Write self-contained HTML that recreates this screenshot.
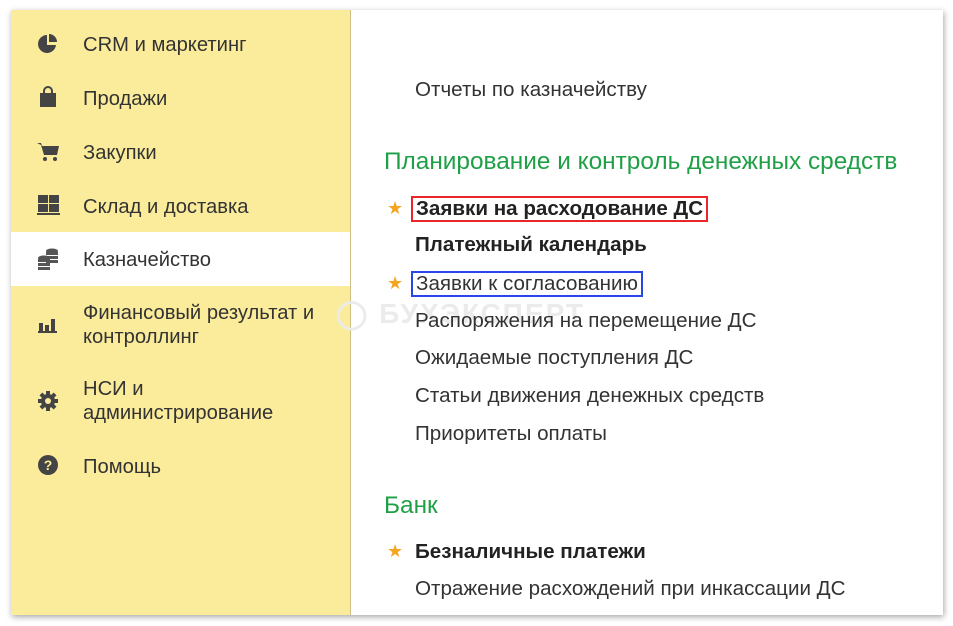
<!DOCTYPE html>
<html><head><meta charset="utf-8"><style>
body{margin:0;width:953px;height:626px;background:#fff;position:relative;overflow:hidden;font-family:"Liberation Sans",Arial,sans-serif;}
.panel{position:absolute;left:11px;top:10px;width:932px;height:605px;background:#fff;box-shadow:1px 2px 6px rgba(0,0,0,.35);overflow:hidden}
.side{position:absolute;left:0;top:0;width:339px;height:605px;background:#FBEC9C;border-right:1px solid #cdbf86}
.it{position:absolute;left:0;width:339px;font-size:20.2px;color:#333;line-height:24px}
.it .t{position:absolute;left:72px;top:1px}
.it svg{position:absolute;left:26px}
.act{background:#fff}
.r{position:absolute;font-size:20.6px;color:#333;white-space:nowrap;line-height:24px}
.b{font-weight:bold;color:#222;font-size:20.6px}
.g{position:absolute;font-size:24.4px;color:#1fa046;white-space:nowrap}
.star{position:absolute;color:#f4a623;font-size:18px}
</style></head><body>
<div class="panel">
<div class="side">
 <div class="it" style="top:22px;height:24px"><svg width="22" height="22" viewBox="0 0 22 22" style="top:1px"><path d="M10 2A9 9 0 1 0 19 12H10Z" fill="#444"/><path d="M12 1A8 8 0 0 1 20 9H12Z" fill="#444"/></svg><span class="t">CRM и маркетинг</span></div>
 <div class="it" style="top:76px;height:24px"><svg width="22" height="22" viewBox="0 0 22 22"><path d="M7 8V5a4 4 0 0 1 8 0v3" stroke="#444" stroke-width="2" fill="none"/><rect x="3" y="7" width="16" height="14" fill="#444"/></svg><span class="t">Продажи</span></div>
 <div class="it" style="top:130px;height:24px"><svg width="24" height="22" viewBox="0 0 24 22"><path d="M0 3h4l1 3h17l-2 9H7L4 5" fill="#444"/><circle cx="8" cy="19" r="2" fill="#444"/><circle cx="18" cy="19" r="2" fill="#444"/></svg><span class="t">Закупки</span></div>
 <div class="it" style="top:184px;height:24px"><svg width="24" height="22" viewBox="0 0 24 22"><rect x="1" y="1" width="10" height="8" fill="#444"/><rect x="12" y="1" width="10" height="8" fill="#444"/><rect x="1" y="10" width="10" height="8" fill="#444"/><rect x="12" y="10" width="10" height="8" fill="#444"/><rect x="0" y="19" width="23" height="2" fill="#444"/></svg><span class="t">Склад и доставка</span></div>
 <div class="it act" style="top:222px;height:54px"><svg width="24" height="24" viewBox="0 0 24 24" style="top:15px"><g fill="#555"><ellipse cx="15" cy="4" rx="6" ry="2.5"/><rect x="9" y="5" width="12" height="3"/><rect x="9" y="9" width="12" height="3"/><rect x="9" y="13" width="12" height="3"/><ellipse cx="7" cy="11" rx="6" ry="2.5"/><rect x="1" y="12" width="12" height="3"/><rect x="1" y="16" width="12" height="3"/><rect x="1" y="20" width="12" height="3"/></g></svg><span class="t" style="top:16px">Казначейство</span></div>
 <div class="it" style="top:290px;height:48px"><svg width="22" height="22" viewBox="0 0 22 22" style="top:13px"><rect x="2" y="10" width="4" height="8" fill="#444"/><rect x="8" y="12" width="4" height="6" fill="#444"/><rect x="14" y="6" width="4" height="12" fill="#444"/><rect x="1" y="18" width="19" height="2" fill="#444"/></svg><span class="t">Финансовый результат и<br>контроллинг</span></div>
 <div class="it" style="top:366px;height:48px"><svg width="22" height="22" viewBox="0 0 22 22" style="top:14px"><g fill="#444"><circle cx="11" cy="11" r="7"/><rect x="9" y="1" width="4" height="20"/><rect x="1" y="9" width="20" height="4"/><rect x="9" y="1" width="4" height="20" transform="rotate(45 11 11)"/><rect x="9" y="1" width="4" height="20" transform="rotate(-45 11 11)"/></g><circle cx="11" cy="11" r="3" fill="#FBEC9C"/></svg><span class="t">НСИ и<br>администрирование</span></div>
 <div class="it" style="top:444px;height:24px"><svg width="22" height="22" viewBox="0 0 22 22"><circle cx="11" cy="11" r="10" fill="#444"/><text x="11" y="16" text-anchor="middle" font-size="14" font-weight="bold" fill="#FBEC9C" font-family="Liberation Sans">?</text></svg><span class="t">Помощь</span></div>
</div>
<div style="position:absolute;left:325px;top:287px;font-size:28px;font-weight:bold;color:#ebebeb;letter-spacing:2px">&#9711; БУХЭКСПЕРТ</div>
<div class="r" style="left:404px;top:68px">Отчеты по казначейству</div>
<div class="g" style="left:373px;top:138px">Планирование и контроль денежных средств</div>
<div class="star" style="left:376px;top:188px">★</div>
<div class="r b" style="left:400px;top:186px;border:2px solid #e8262b;padding:0 3px;line-height:22px">Заявки на расходование ДС</div>
<div class="r b" style="left:404px;top:223px">Платежный календарь</div>
<div class="star" style="left:376px;top:263px">★</div>
<div class="r" style="left:400px;top:261px;border:2px solid #2b46e6;padding:0 3px;line-height:22px">Заявки к согласованию</div>
<div class="r" style="left:404px;top:299px">Распоряжения на перемещение ДС</div>
<div class="r" style="left:404px;top:336px">Ожидаемые поступления ДС</div>
<div class="r" style="left:404px;top:374px">Статьи движения денежных средств</div>
<div class="r" style="left:404px;top:412px">Приоритеты оплаты</div>
<div class="g" style="left:373px;top:482px">Банк</div>
<div class="star" style="left:376px;top:531px">★</div>
<div class="r b" style="left:404px;top:530px">Безналичные платежи</div>
<div class="r" style="left:404px;top:567px">Отражение расхождений при инкассации ДС</div>
</div>
</body></html>
